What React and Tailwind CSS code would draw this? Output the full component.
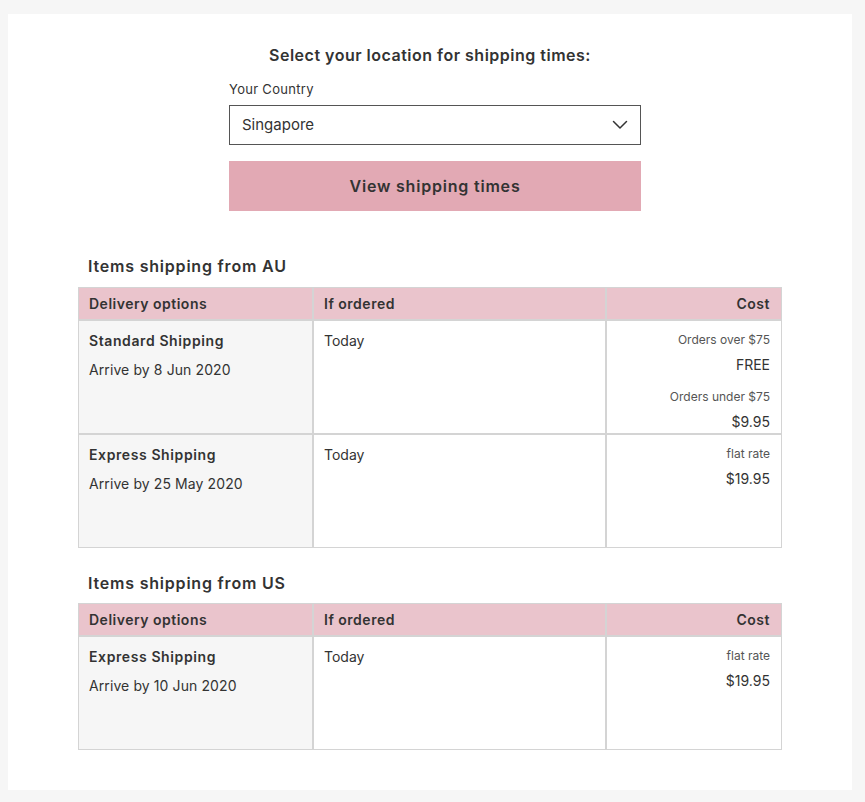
import React from "react";

const font = { fontFamily: "Inter, 'Noto Sans', sans-serif" };

function Chevron() {
  return (
    <svg width="16" height="10" viewBox="0 0 16 10" fill="none">
      <path d="M1.5 1.5 L8 8 L14.5 1.5" stroke="#333" strokeWidth="1.5" strokeLinecap="round" strokeLinejoin="round" />
    </svg>
  );
}

function ShipTable({ rows }) {
  const cell = "border border-[#d4d4d4] align-top";
  return (
    <table className="w-[704px] border-separate border-spacing-0 table-fixed text-[#333]">
      <colgroup>
        <col className="w-[235px]" />
        <col className="w-[293px]" />
        <col className="w-[176px]" />
      </colgroup>
      <thead>
        <tr className="h-[33px] bg-[#eac4cc]">
          <th className="border border-[#d4d4d4] text-left font-semibold text-[14px] tracking-[0.5px] pl-[10px] align-middle">Delivery options</th>
          <th className="border border-[#d4d4d4] text-left font-semibold text-[14px] tracking-[0.5px] pl-[10px] align-middle">If ordered</th>
          <th className="border border-[#d4d4d4] text-right font-semibold text-[14px] tracking-[0.5px] pr-[11px] align-middle">Cost</th>
        </tr>
      </thead>
      <tbody>
        {rows.map((r, i) => (
          <tr key={i} className="h-[114px]">
            <td className={`${cell} bg-[#f6f6f6] pl-[10px] pt-[10px]`}>
              <div className="text-[14px] leading-[20px] font-semibold tracking-[0.6px]">{r.name}</div>
              <div className="text-[14px] leading-[20px] mt-[9px] tracking-[0.1px]">{r.arrive}</div>
            </td>
            <td className={`${cell} pl-[10px] pt-[10px]`}>
              <div className="text-[14px] leading-[20px]">Today</div>
            </td>
            <td className={`${cell} pr-[11px] pt-[11px] text-right`}>
              {r.cost.map((c, j) => (
                <div key={j} className={j > 0 ? "mt-[14px]" : ""}>
                  <div className="text-[12px] leading-[16px] text-[#555]">{c.label}</div>
                  <div className="text-[14px] leading-[20px] mt-[7px]">{c.price}</div>
                </div>
              ))}
            </td>
          </tr>
        ))}
      </tbody>
    </table>
  );
}

export default function App() {
  return (
    <div className="min-h-[802px] bg-[#f6f6f6] pt-[14px] pl-[8px] pr-[13px] pb-[12px]" style={font}>
      <div className="bg-white h-[776px] pt-[31px] flex flex-col items-center text-[#333]">
        <div className="text-[16px] leading-[20px] font-semibold tracking-[0.5px]">Select your location for shipping times:</div>
        <div className="w-[422px] pl-[10px] mt-[15px] flex flex-col">
          <div className="text-[13px] leading-[18px] tracking-[0.3px]">Your Country</div>
          <div className="mt-[7px] h-[40px] border border-[#555] flex items-center justify-between pl-[12px] pr-[12px]">
            <span className="text-[15px]">Singapore</span>
            <Chevron />
          </div>
          <button className="mt-[16px] h-[50px] bg-[#e2a9b4] text-[16px] font-semibold tracking-[0.8px] text-[#333]">View shipping times</button>
        </div>
        <div className="w-[704px] mt-[45px]">
          <div className="pl-[10px] text-[16px] leading-[20px] font-semibold tracking-[0.8px]">Items shipping from AU</div>
          <div className="mt-[11px]">
            <ShipTable
              rows={[
                {
                  name: "Standard Shipping",
                  arrive: "Arrive by 8 Jun 2020",
                  cost: [
                    { label: "Orders over $75", price: "FREE" },
                    { label: "Orders under $75", price: "$9.95" },
                  ],
                },
                {
                  name: "Express Shipping",
                  arrive: "Arrive by 25 May 2020",
                  cost: [{ label: "flat rate", price: "$19.95" }],
                },
              ]}
            />
          </div>
          <div className="pl-[10px] mt-[25px] text-[16px] leading-[20px] font-semibold tracking-[0.8px]">Items shipping from US</div>
          <div className="mt-[10px]">
            <ShipTable
              rows={[
                {
                  name: "Express Shipping",
                  arrive: "Arrive by 10 Jun 2020",
                  cost: [{ label: "flat rate", price: "$19.95" }],
                },
              ]}
            />
          </div>
        </div>
      </div>
    </div>
  );
}
